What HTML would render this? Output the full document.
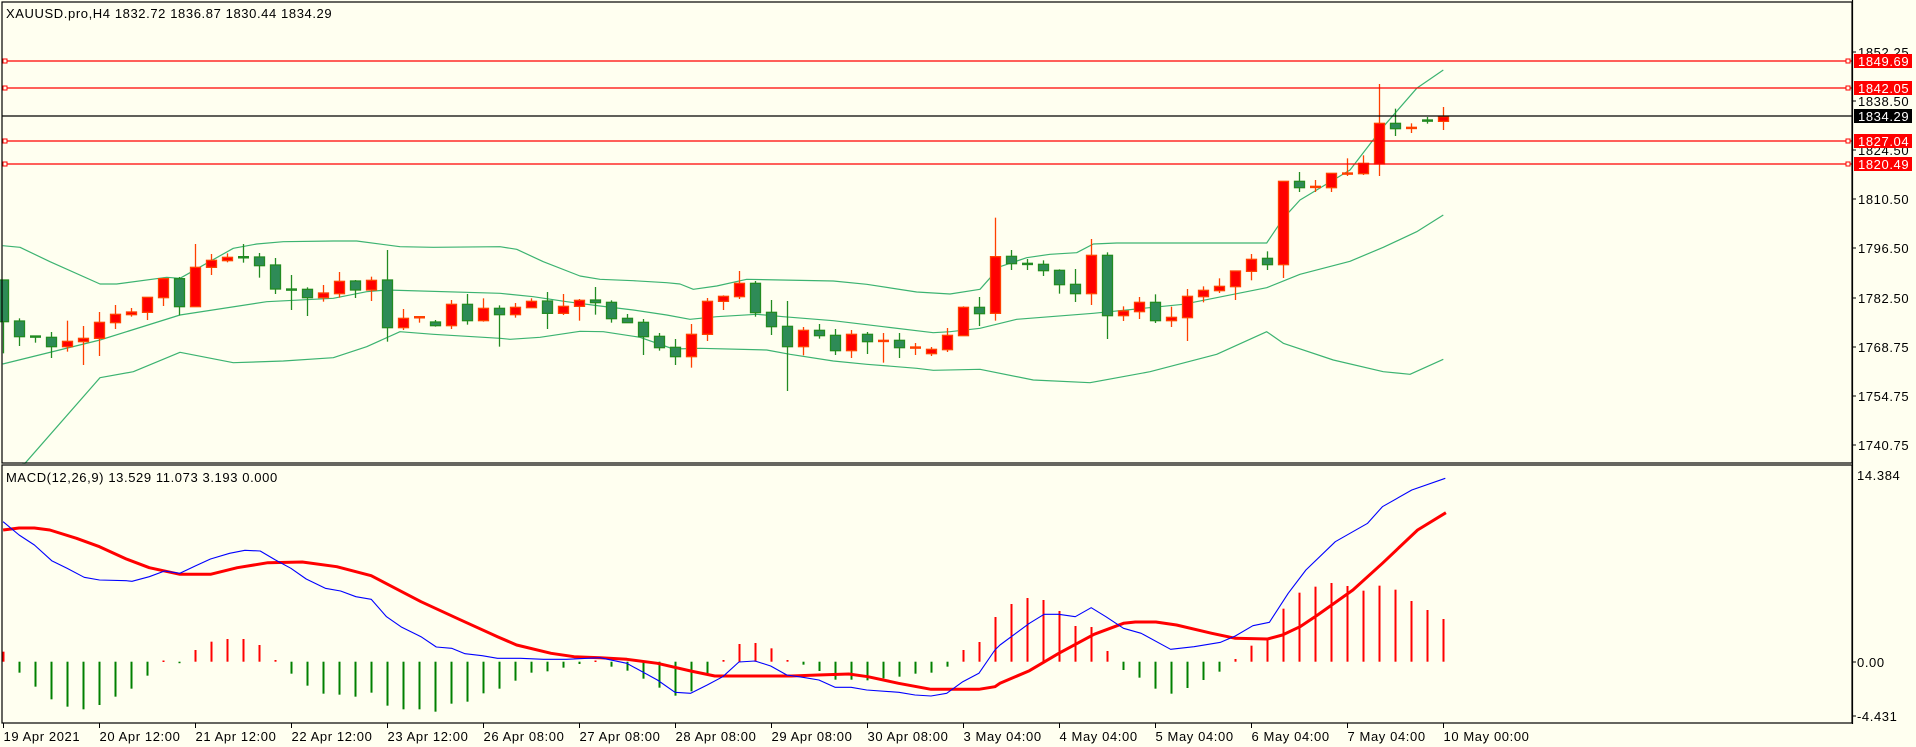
<!DOCTYPE html>
<html><head><meta charset="utf-8">
<style>
html,body{margin:0;padding:0;background:#fffff0;width:1916px;height:747px;overflow:hidden}
svg{display:block}
text{font-family:"Liberation Sans",sans-serif;font-size:13px;letter-spacing:0.6px;fill:#000}
</style></head>
<body>
<svg id="s" width="1916" height="747" xmlns="http://www.w3.org/2000/svg">
<rect width="1916" height="747" fill="#fffff0"/>
<g id="g"></g>
<text x="6" y="18">XAUUSD.pro,H4  1832.72 1836.87 1830.44 1834.29</text>
<text x="6" y="482">MACD(12,26,9) 13.529 11.073 3.193 0.000</text>
</svg>
<script>
var NS="http://www.w3.org/2000/svg",G=document.getElementById('g');
function el(t,a){var e=document.createElementNS(NS,t);for(var k in a)e.setAttribute(k,a[k]);G.appendChild(e);return e;}
function cx(i){return 3.5+16*i;}
var A=[
['g',150,275,150,370],['g',273,320,265,348],['g',319,323,319,338],['g',322,350,306,384],['r',334,350,272,365],
['r',325,335,288,405],['r',277,325,246,378],['r',253,278,225,297],['r',246,254,234,260],['r',202,247,202,270],
['r',146,203,143,228],['g',146,230,141,256],['r',112,230,42,230],['r',91,112,72,135],['r',82,92,70,97],
['g',81,81,42,98],['g',81,107,69,143],['g',105,177,84,192],['g',178,178,135,240],['g',178,203,172,258],
['r',189,203,165,215],['r',154,191,126,203],['g',153,180,150,204],['r',151,180,140,213],['g',150,293,60,335],
['r',265,293,237,300],['r',261,266,261,278],['g',276,287,270,290],['r',223,287,210,297],['g',223,272,192,284],
['r',235,272,205,275],['g',235,254,226,350],['r',232,254,219,263],['r',214,233,205,233],['g',213,250,186,297],
['r',229,250,192,255],['r',211,229,207,272],['g',210,218,171,254],['g',217,266,211,278],['g',265,278,252,278],
['g',277,320,267,375],['g',319,353,309,362],['g',352,380,327,405],['r',313,380,282,413],['r',214,313,204,333],
['r',199,214,196,240],['r',160,200,123,207],['g',160,248,153,260],['g',247,290,210,315],['g',289,350,213,483],
['r',301,350,291,376],['g',301,317,282,326],['g',316,362,297,375],['r',313,362,300,384],['g',313,335,306,372],
['r',332,332,309,398],['g',331,353,309,384],['r',352,352,339,375],['r',358,371,351,378],['r',316,359,294,366],
['r',232,317,229,317],['g',232,251,201,288]];
var B=[
['r',590,760,473,782],['g',589,611,570,630],['g',611,611,597,630],['g',613,632,601,648],['g',631,674,628,701],
['g',673,701,627,726],['r',586,701,537,735],['g',586,767,577,837],['r',753,767,739,783],['r',727,755,711,777],
['g',727,782,703,789],['r',772,782,740,801],['r',709,773,687,843],['r',691,710,679,727],['r',679,692,655,699],
['r',633,680,633,720],['r',598,634,582,661],['g',595,614,574,630],['r',364,614,364,654],['g',364,383,336,396],
['r',380,380,360,396],['r',340,383,340,396],['r',340,340,295,348],['r',310,341,286,345],['r',190,312,72,348],
['g',190,206,146,228],['r',203,203,190,219],['g',181,184,171,191],['r',170,184,141,210]];
var C=[];
A.forEach(function(c){C.push([c[0],230+c[1]/3,230+c[2]/3,230+c[3]/3,230+c[4]/3]);});
B.forEach(function(c){C.push([c[0],60+c[1]/3,60+c[2]/3,60+c[3]/3,60+c[4]/3]);});

function mono(pts){var o=[],lx=-1e9;pts.forEach(function(p){if(p[0]>lx){o.push(p);lx=p[0];}});return o;}
function pl(pts,col,w){pts=mono(pts);el('polyline',{points:pts.map(function(p){return p[0].toFixed(1)+','+p[1].toFixed(1)}).join(' '),fill:'none',stroke:col,'stroke-width':w,'stroke-linejoin':'round'});}
function z45(arr,ox){return arr.map(function(p){return [ox+p[0]/3,230+p[1]/3];});}
function z6(arr){return arr.map(function(p){return [950+p[0]/3,60+p[1]/3];});}
var bb='#3cb371';
var up=[].concat(z45([[8,47],[60,52],[150,95],[300,162],[350,162],[500,142],[540,145],[700,55],[770,42],[850,35],[1000,33],[1070,33],[1200,50],[1300,52],[1500,50]],0),
 z45([[50,58],[130,95],[240,138],[300,148],[400,152],[500,158],[540,162],[580,178],[650,168],[740,148],[1000,153],[1100,163],[1250,186],[1350,192],[1440,178]],500),
 z6([[0,700],[90,688],[150,620],[230,593],[300,583],[380,578],[430,552],[500,549],[950,549],[1000,475],[1050,420],[1200,330],[1300,200],[1400,85],[1480,30]]));
var mid=[].concat(z45([[8,402],[300,330],[540,255],[800,215],[1000,205],[1100,185],[1160,180],[1500,190]],0),
 z45([[100,200],[200,215],[300,228],[400,240],[500,255],[570,268],[650,260],[770,253],[850,260],[1000,272],[1150,290],[1300,308],[1350,305],[1440,295]],500),
 z6([[0,818],[90,808],[200,778],[430,760],[700,733],[950,683],[1050,643],[1200,604],[1300,562],[1400,515],[1480,465]]));
var lo=[[22,463]].concat(z45([[75,700],[300,443],[400,425],[540,367],[700,398],[850,393],[1000,383],[1100,350],[1200,305],[1300,313],[1500,325]],0),
 z45([[30,328],[120,322],[240,304],[310,305],[420,322],[520,357],[600,355],[800,360],[870,373],[1000,393],[1100,403],[1250,415],[1300,421],[1440,418]],500),
 z6([[0,932],[90,928],[250,960],[420,968],[600,935],[800,883],[950,815],[1000,850],[1150,900],[1300,935],[1380,943],[1480,898]]));
pl(up,bb,1.2);pl(mid,bb,1.2);pl(lo,bb,1.2);

C.forEach(function(c,i){
 var x=cx(i),r=c[0]=='r';
 var fill=r?'#ff0000':'#2e8b57',edge=r?'#ff4000':'#228b22';
 el('line',{x1:x,y1:c[3],x2:x,y2:c[4],stroke:edge,'stroke-width':1.3});
 var h=c[2]-c[1];
 if(h<2){el('rect',{x:x-5.5,y:c[1]-1,width:11,height:2.5,fill:edge});}
 else el('rect',{x:x-5,y:c[1],width:10,height:h,fill:fill,stroke:edge,'stroke-width':1.3});
});

[[61,'1849.69'],[88,'1842.05'],[141,'1827.04'],[164,'1820.49']].forEach(function(l){
 el('line',{x1:2,y1:l[0],x2:1852,y2:l[0],stroke:'#ff0000','stroke-width':1.3});
 el('rect',{x:3,y:l[0]-2,width:4,height:4,fill:'#fffff0',stroke:'#ff0000','stroke-width':1});
 el('rect',{x:1846,y:l[0]-2,width:4,height:4,fill:'#fffff0',stroke:'#ff0000','stroke-width':1});
});
el('line',{x1:2,y1:116,x2:1852,y2:116,stroke:'#000','stroke-width':1.2});

var h1=[575,638,680,718,740,748,735,710,686,647,603,607,570,545,537,537,555,600,641,677,701,704,710,698,737,748,748,755,731,725,700,686,662,638,634,623,612,603,
620,632,656,683,707,694,645,600,552,549,565,600,614,633,659,659,661,655,650,641,638,620,570,546,471,432,414,420,453,498,501,573,630,653,686,701,684,660,635,597,557,541,446,398,380,369,378,392,377,389,423,450,477];
h1.forEach(function(p,i){
 var y=460+p/3,x=cx(i),red=y<661.7;
 var y1=Math.min(y,661.7),y2=Math.max(y,661.7);
 if(y2-y1<1.2){y1=red?660.5:661.7;y2=y1+1.5;}
 el('rect',{x:x-1,y:y1,width:2,height:y2-y1,fill:red?'#ff0000':'#008000'});
});
function z7(a){return a.map(function(p){return [p[0]/2.613,460+p[1]/3];});}
function z8(a){return a.filter(function(p){return p[0]<1040;}).map(function(p){return [600+p[0]/2.613,460+p[1]/3];});}
function z3(a){return a.map(function(p){return [1000+p[0]/1.7,460+p[1]/3];});}
var blue=[].concat(z7([[8,185],[50,225],[90,255],[135,302],[175,325],[220,352],[260,360],[330,362],[345,364],[390,350],[430,333],[470,340],[510,318],[550,297],[600,280],[640,271],[680,273],[720,300],[760,325],[800,357],[850,385],[890,393],[930,410],[970,418],[1010,470],[1050,502],[1100,530],[1140,561],[1180,565],[1215,581],[1260,587],[1300,595],[1360,595],[1420,598],[1480,598]]),
 z8([[0,593],[70,610],[150,660],[196,697],[237,700],[280,675],[321,650],[363,606],[405,603],[446,618],[488,645],[530,652],[572,660],[614,682],[656,682],[697,690],[781,697],[823,705],[865,708],[906,700],[948,665],[990,640],[1032,570]]),
 z3([[0,555],[50,490],[75,463],[100,463],[128,470],[155,443],[180,470],[210,505],[240,520],[290,568],[330,560],[375,547],[400,528],[430,497],[458,487],[490,400],[520,330],[570,245],[625,190],[650,140],[700,90],[757,55]]));
var redl=[].concat(z7([[8,210],[50,204],[90,204],[130,210],[200,235],[260,260],[330,297],[390,323],[470,343],[550,343],[620,323],[700,308],[790,306],[880,320],[970,347],[1050,395],[1100,425],[1200,478],[1300,530],[1350,555],[1440,580],[1500,590]]),
 z8([[0,593],[70,598],[150,610],[237,633],[300,648],[400,648],[500,648],[570,645],[650,642],[700,650],[780,670],[865,688],[990,688],[1032,680]]),
 z3([[0,670],[50,632],[100,580],[160,523],[210,490],[230,486],[265,486],[300,495],[360,520],[400,535],[455,537],[480,525],[510,500],[540,465],[600,390],[650,310],[710,210],[758,158]]));
pl(redl,'#ff0000',3);
pl(blue,'#0000ff',1.1);

el('rect',{x:2,y:2,width:1850,height:461,fill:'none',stroke:'#000','stroke-width':1.2});
el('rect',{x:2,y:465,width:1850,height:258,fill:'none',stroke:'#000','stroke-width':1.2});
el('rect',{x:1853,y:0,width:63,height:747,fill:'#fffff0'});
el('line',{x1:1852.5,y1:0,x2:1852.5,y2:724,stroke:'#000','stroke-width':1.2});

function T(x,y,s,fill){var t=el('text',{x:x,y:y});t.textContent=s;if(fill)t.setAttribute('style','fill:'+fill);return t;}
[[52,'1852.25'],[101,'1838.50'],[150,'1824.50'],[199,'1810.50'],[248,'1796.50'],[298,'1782.50'],[347,'1768.75'],[396,'1754.75'],[445,'1740.75']].forEach(function(l){
 el('line',{x1:1852,y1:l[0],x2:1856,y2:l[0],stroke:'#000','stroke-width':1});
 T(1858,l[0]+5,l[1]);
});
[[61,'1849.69','#ff0000'],[88,'1842.05','#ff0000'],[116,'1834.29','#000'],[141,'1827.04','#ff0000'],[164,'1820.49','#ff0000']].forEach(function(l){
 el('rect',{x:1854,y:l[0]-7,width:58,height:14,fill:l[2]});
 T(1858,l[0]+5,l[1],'#fff');
});
[[475,'14.384',0],[662,'0.00',1],[716,'-4.431',1]].forEach(function(l){
 if(l[2])el('line',{x1:1852,y1:l[0],x2:1856,y2:l[0],stroke:'#000','stroke-width':1});
 T(1857,l[0]+5,l[1]);
});
['19 Apr 2021','20 Apr 12:00','21 Apr 12:00','22 Apr 12:00','23 Apr 12:00','26 Apr 08:00','27 Apr 08:00','28 Apr 08:00','29 Apr 08:00','30 Apr 08:00','3 May 04:00','4 May 04:00','5 May 04:00','6 May 04:00','7 May 04:00','10 May 00:00'].forEach(function(s,k){
 var x=cx(6*k);
 el('line',{x1:x,y1:723,x2:x,y2:728,stroke:'#000','stroke-width':1});
 T(x,741,s);
});
</script>
</body></html>
